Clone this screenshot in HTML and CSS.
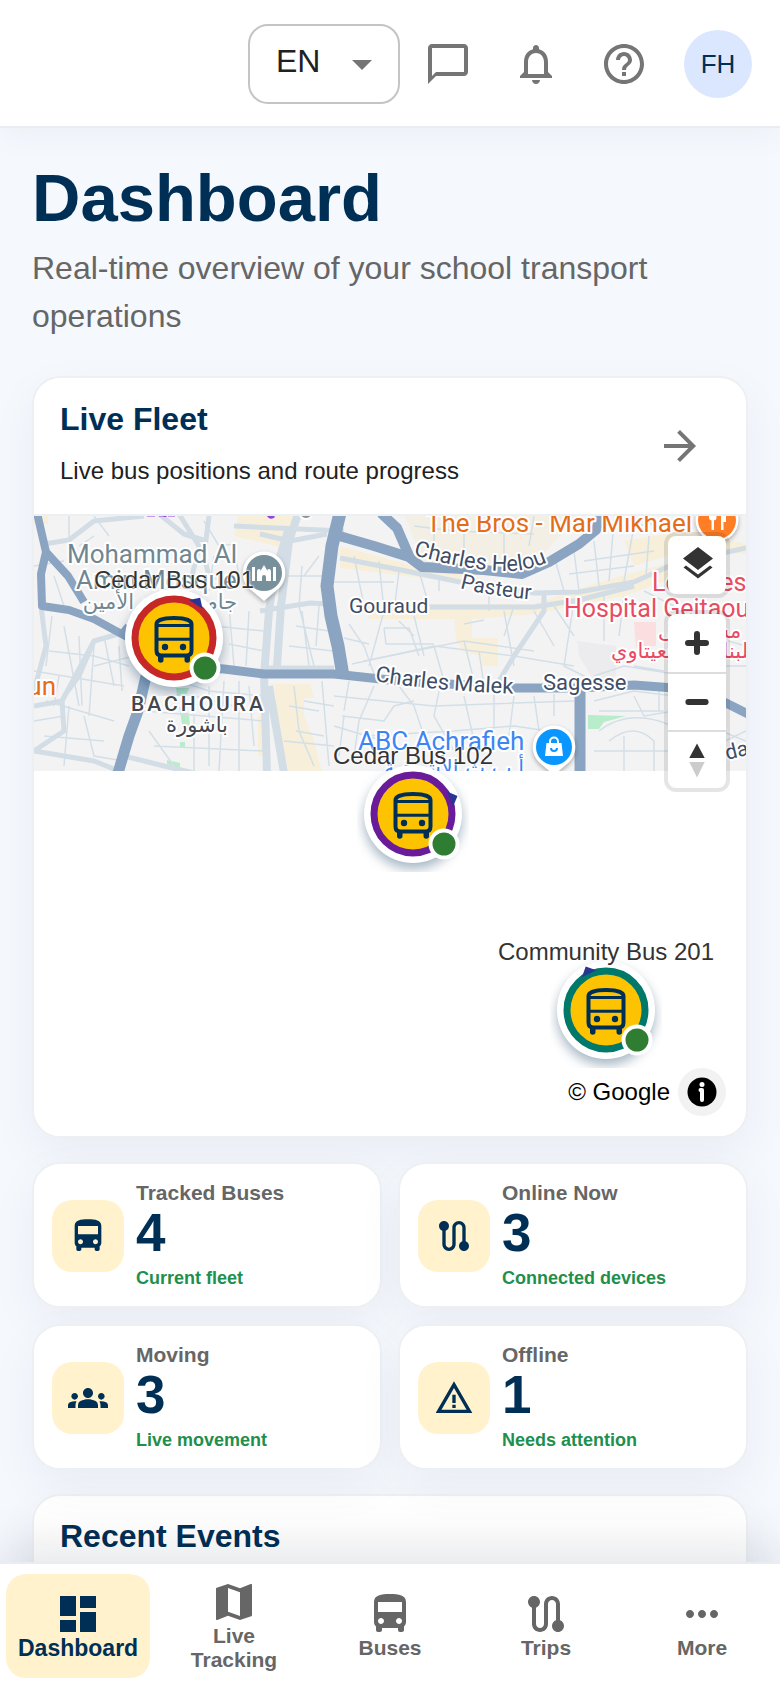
FILE: index.html
```html
<!DOCTYPE html>
<html lang="en">

<head>
  <meta charset="UTF-8" />
  <meta name="viewport" content="width=device-width, initial-scale=1.0" />
  <title>Dashboard</title>
  <link rel="stylesheet" href="styles.css">
</head>

<body>
  <!-- shared icons -->
  <svg class="sprite" aria-hidden="true">
    <symbol id="i-bus" viewBox="0 0 24 24">
      <path d="M4 16c0 .88.39 1.67 1 2.22V20c0 .55.45 1 1 1h1c.55 0 1-.45 1-1v-1h8v1c0 .55.45 1 1 1h1c.55 0 1-.45 1-1v-1.780c.61-.55 1-1.340 1-2.220V6c0-3.500-3.580-4-8-4s-8 .5-8 4v10zm3.500 1c-.83 0-1.500-.67-1.500-1.500S6.670 14 7.500 14s1.500.67 1.500 1.500S8.330 17 7.500 17zm9 0c-.83 0-1.500-.67-1.500-1.500s.67-1.500 1.500-1.500 1.500.67 1.500 1.500-.67 1.500-1.500 1.500zm1.500-6H6V6h12v5z" />
    </symbol>
    <symbol id="i-route" viewBox="0 0 24 24">
      <path d="M19 15.180V7c0-2.210-1.790-4-4-4s-4 1.790-4 4v10c0 1.100-.9 2-2 2s-2-.9-2-2V8.820C8.160 8.400 9 7.300 9 6c0-1.660-1.340-3-3-3S3 4.340 3 6c0 1.300.84 2.400 2 2.820V17c0 2.210 1.790 4 4 4s4-1.790 4-4V7c0-1.100.9-2 2-2s2 .9 2 2v8.180c-1.160.41-2 1.510-2 2.820 0 1.660 1.340 3 3 3s3-1.340 3-3c0-1.300-.84-2.400-2-2.820z" />
    </symbol>
    <symbol id="i-marker-bus" viewBox="-24 -24 48 50">
      <g fill="none" stroke="#002f56" stroke-width="4">
        <path d="M-17.500-14C-17.500-18-10-20 0-20S17.500-18 17.500-14V12.500Q17.500 17.500 12.500 17.500H-12.500Q-17.500 17.500-17.500 12.500Z" />
        <path d="M-17-12.500H17M-17 1.300H17" stroke-width="3" />
      </g>
      <path fill="#002f56" d="M-16 17h5.500v5a2.700 2.700 0 0 1-5.500 0zM10.500 17H16v5a2.700 2.700 0 0 1-5.500 0z" />
      <circle cx="-9" cy="9" r="3.200" fill="#002f56" />
      <circle cx="9" cy="9" r="3.200" fill="#002f56" />
    </symbol>
  </svg>

  <div class="app">
    <header class="topbar">
      <div class="lang">
        <select class="lang-select" aria-label="Language">
          <option>EN</option>
        </select>
        <svg class="lang-arrow" viewBox="0 0 24 24"><path d="M7 10l5 5 5-5z" /></svg>
      </div>
      <button class="icon-btn" aria-label="Messages">
        <svg viewBox="0 0 24 24"><path d="M20 2H4c-1.100 0-2 .9-2 2v18l4-4h14c1.100 0 2-.9 2-2V4c0-1.100-.9-2-2-2zm0 14H6l-2 2V4h16v12z" /></svg>
      </button>
      <button class="icon-btn" aria-label="Notifications">
        <svg viewBox="0 0 24 24"><path d="M12 22c1.100 0 2-.9 2-2h-4c0 1.100.9 2 2 2zm6-6v-5c0-3.070-1.630-5.640-4.500-6.320V4c0-.83-.67-1.500-1.500-1.500s-1.500.67-1.500 1.500v.68C7.640 5.360 6 7.920 6 11v5l-2 2v1h16v-1l-2-2zm-2 1H8v-6c0-2.480 1.510-4.500 4-4.500s4 2.020 4 4.500v6z" /></svg>
      </button>
      <button class="icon-btn" aria-label="Help">
        <svg viewBox="0 0 24 24"><path d="M11 18h2v-2h-2v2zm1-16C6.480 2 2 6.480 2 12s4.480 10 10 10 10-4.480 10-10S17.520 2 12 2zm0 18c-4.410 0-8-3.590-8-8s3.590-8 8-8 8 3.590 8 8-3.590 8-8 8zm0-14c-2.210 0-4 1.790-4 4h2c0-1.100.9-2 2-2s2 .9 2 2c0 2-3 1.750-3 5h2c0-2.250 3-2.500 3-5 0-2.210-1.790-4-4-4z" /></svg>
      </button>
      <button class="avatar">FH</button>
    </header>

    <main class="content">
      <h1 class="title">Dashboard</h1>
      <p class="subtitle">Real-time overview of your school transport operations</p>

      <section class="card fleet">
        <div class="card-head">
          <div class="card-text">
            <h2 class="card-title">Live Fleet</h2>
            <p class="card-sub">Live bus positions and route progress</p>
          </div>
          <button class="icon-btn" aria-label="Open live tracking">
            <svg viewBox="0 0 24 24"><path d="M12 4l-1.410 1.410L16.170 11H4v2h12.170l-5.580 5.590L12 20l8-8z" /></svg>
          </button>
        </div>

        <div class="map">
          <svg class="tile" width="712" height="255" viewBox="0 0 712 255">
            <rect width="712" height="255" fill="#f4f3f4" />
            <!-- blocks -->
            <g fill="#f7efd9">
              <path d="M205-2H262L250 32 200 20Z" />
              <path d="M370-2H545L510 38 460 52 390 48Z" fill="#f3efe4" />
              <path d="M306 30L380 50 450 62 440 68 306 52Z" />
              <path d="M330 88H500L560 68 640 45V62L590 80 500 98 440 103H335Z" />
              <path d="M420 98H438V122H464V150H448V140L430 136 422 125Z" />
              <path d="M240 168H276L280 182H270V200L280 225 288 257H255L244 210Z" />
              <path d="M224 200H232V240H224ZM590 25L650 15 712 28V38L650 35 600 50ZM0 -2H14V8H0Z" />
            </g>
            <path d="M543 125L582 130V160L560 165 545 140Z" fill="#ececee" />
            <path d="M600 106H622V130L602 132Z" fill="#fbdfe0" />
            <g fill="#b8ecca">
              <path d="M142 172H155L152 180H143ZM145 190L155 198 156 212 148 208ZM146 226H151V231H146ZM133 244L146 247V252L133 248Z" />
              <path d="M554 199L592 200 570 206 565 213H554Z" />
            </g>
            <!-- side streets -->
            <g fill="none" stroke="#d3dfe7" stroke-width="1.500">
              <path d="M35 0V30M60 0L75 20M0 50L30 45M20 60L30 90M45 30L60 20M170 5L185 30 200 28M180 40L175 75M200 30L205 60M160 60L200 65M195 90L200 150M215 95L212 150M180 110L230 115M195 128L230 135M130 110L160 95" />
              <path d="M18 100L12 150M30 110L45 190M15 135L60 140 95 150M45 120L48 190M60 130L55 200M0 155L90 170M25 160L20 190M60 150L100 140M70 120L80 170M85 130L88 175M12 185L80 205M35 190L30 250M50 200L60 240 90 245M10 220L70 225M0 205L30 200" />
              <path d="M110 195L230 205M115 215L140 250M120 230L230 235M160 200V255M175 170V250M190 165L185 255M205 165V255M215 170L220 230M130 160L175 175 230 180M160 180L200 190" />
              <path d="M268 50L265 90 280 150M285 40L270 60M250 60H290M262 110L295 115M255 130L300 135M268 95L275 150M285 90L282 130M320 40L330 90M345 45L350 95 335 150M365 55L360 95M300 66H360M385 55L395 90M405 60V75M315 108L330 130 340 158M350 112H375L385 140M350 112L352 128H400M365 105L380 120M380 100L390 140M310 122L335 128M318 148L400 130 480 140 540 150" />
              <path d="M330 145L430 125 500 135M400 130L410 165M430 125L440 165M445 135L450 170M480 90L470 120M455 78V95M430 108L450 104M315 165L310 195M340 170L325 205 320 240M300 180L400 190 540 185M308 200L350 205 360 190 380 185M365 170L380 190 390 220M405 175L400 200 420 235M430 180L440 225M460 178V225M480 180L475 220M500 180L505 215M520 178V200M330 220L420 215 480 210 535 218M300 210L350 225" />
              <path d="M260 170L265 215 280 250M270 185L300 190M255 190L285 195M262 215L290 220M250 225L300 230M288 165L295 250M310 200L305 240M500 0L495 30M520 40L530 75M540 35L545 75M560 25L565 70M580 5L575 65M600 10L590 65M615 20L612 60M550 45L620 35M535 58L600 50M560 15L640 5M470 95L480 150M500 95L520 130M520 90L540 120M540 85L530 150 560 165M570 80V125M590 80L585 120M610 75L640 90M575 100H610M600 150L630 155M560 160L590 150 640 158" />
              <path d="M560 185L600 175 640 180M565 195H630M565 215Q590 195 625 205T640 255M575 225Q600 205 620 225V255M590 220V255M560 235H640M600 180L610 200 640 195M625 170V195M650 200L712 225M660 240L712 215M640 110L712 130M650 150H712M380 10L420 15 500 18M400 0V40M430 15V50M470 5V50" />
            </g>
            <g fill="none" stroke="#d3dde5" stroke-linejoin="round">
              <path stroke-width="5" d="M10 28L35 24 60 5 110 0M125-2L150 18 172 25M145-2L165 30 158 60M175 0L170 40 175 60M0 190L28 185 60 125 95 115M28 185L30 215 0 235M60 125L45 160 30 180M0 235L60 245 90 257M90 240L130 250 160 257M7 90L12 130 0 175M226 18L256 25 293 18M226 95L276 87 293 88" />
              <path stroke-width="8" d="M264-2L255 25 247 90 243 150 240 160M254 15L240 60 235 95 230 160 233 257M235 170L250 257" />
              <path stroke-width="5" d="M306 42L372 55 426 66 500 77 545 76 600 66 640 48 712 32M396 91H500L545 84 600 70M510 77L510 95 480 140 462 170M310 15L200 10M290 153H240" />
              <path stroke-width="7" d="M228 153H300" />
            </g>
            <!-- main roads -->
            <g fill="none" stroke="#8aa4c1" stroke-width="10" stroke-linejoin="round">
              <path stroke-width="8" d="M3-3L12 36 7 58 8 90 35 94 60 103 95 122M12 36L34 60 50 86" />
              <path d="M88 112L110 130M112 160L104 195 95 220 84 257" stroke-width="11" />
              <path d="M140 150L190 153 230 158 300 158 365 165 480 172 545 172 600 169 640 172 690 186 714 198" stroke-width="9" />
              <path d="M306-3L298 30 293 70 297 100 304 130 309 160" stroke-width="13" />
              <path d="M302 19L340 30 378 42M347-3L363 12 376 42 388 51 450 54 488 58 515 46 545 28 562 14 567-3" />
              <path d="M546 176V257" stroke-width="11" />
            </g>
            <path d="M113-1h8M125-1h6v2M134-1h7M234-1q3 4 6 1" stroke="#9344e0" stroke-width="3" fill="none" />
            <circle cx="272" cy="-4" r="7" fill="#8b9296" stroke="#fff" stroke-width="2" />

            <!-- places -->
            <g class="place">
              <g fill="#6f8792">
                <text x="33" y="47">Mohammad Al</text>
                <text x="42" y="73">Amin Mosque</text>
                <text class="ar" x="126" y="93" text-anchor="middle">جامع محمد الأمين</text>
              </g>
              <g fill="#e36d1a">
                <text x="392" y="16">The Bros - Mar Mikhael</text>
                <text x="22" y="179" text-anchor="end">un</text>
              </g>
              <g fill="#e94c62">
                <text class="sm" x="618" y="75">Lebanese</text>
                <text class="sm" x="530" y="101">Hospital Geitaoui</text>
                <text class="ar" x="624" y="122" text-anchor="end">مستشفى</text>
                <text class="ar" x="577" y="142" text-anchor="end">اللبناني الجعيتاوي</text>
              </g>
              <g fill="#3c85f2">
                <text x="324" y="234">ABC Achrafieh</text>
                <text class="ar" x="490" y="259" text-anchor="start">أ ب ث الأشرفية</text>
              </g>
              <g fill="#44474d">
                <text class="district" x="97" y="195">BACHOURA</text>
                <text class="ar" x="163" y="216" text-anchor="middle">باشورة</text>
              </g>
            </g>
            <g class="street">
              <path id="helou" d="M379 39Q440 56 478 55 500 54 524 41" fill="none" />
              <path id="pasteur" d="M426 72Q455 80 504 84" fill="none" />
              <path id="malek" d="M341 165Q400 175 488 178" fill="none" />
              <text class="lg"><textPath href="#helou">Charles Helou</textPath></text>
              <text><textPath href="#pasteur">Pasteur</textPath></text>
              <text class="lg"><textPath href="#malek">Charles Malek</textPath></text>
              <text class="lg" x="509" y="174">Sagesse</text>
              <text x="315" y="97">Gouraud</text>
              <text transform="translate(693 244) rotate(-14)">dar</text>
            </g>

            <!-- place pins -->
            <g class="pin">
              <path d="M230 35.500a21.500 21.500 0 0 1 13 38.500L230 85l-13-11a21.500 21.500 0 0 1 13-38.500z" fill="#fff" />
              <circle cx="230" cy="57" r="18" fill="#78909c" />
              <path d="M218 51h3v14h-3zM239 51h3v14h-3zM223 65V56q0-3 2-3t2 3v-2l3-5 3 5v2q0-3 2-3t2 3v9h-5v-4a2 2 0 0 0-4 0v4z" fill="#fff" />
            </g>
            <g class="pin">
              <path d="M520 209.500a21.500 21.500 0 0 1 13 38.500L520 259l-13-11a21.500 21.500 0 0 1 13-38.500z" fill="#fff" />
              <circle cx="520" cy="231" r="18" fill="#0a96ff" />
              <path d="M512.500 227h15l1.500 13h-18z" fill="#fff" />
              <path d="M516 228v-2.500a4 4 0 0 1 8 0V228" fill="none" stroke="#fff" stroke-width="2" />
              <path d="M517 232a3 3 0 0 0 6 0" fill="none" stroke="#0a96ff" stroke-width="2" />
            </g>
            <g class="pin">
              <circle cx="683" cy="4" r="21.500" fill="#fff" />
              <circle cx="683" cy="4" r="19" fill="#ff7d24" />
              <path d="M675-5v7q0 2 2.500 2.500V14h2.500V4.500q2.500-.5 2.500-2.500V-5zM687-5v19h2.500V6h2.500V0q0-5-5-5z" fill="#fff" />
            </g>
          </svg>

          <div class="marker marker-101">
            <svg viewBox="-56 -58 112 116">
              <circle class="m-disk" r="49" />
              <circle r="39" fill="#fdc300" stroke="#c62828" stroke-width="7" />
              <path d="M0-48L8-40H-8z" fill="#283593" transform="rotate(33)" />
              <use href="#i-marker-bus" x="-24" y="-24" width="48" height="50" />
              <circle cx="31" cy="30" r="13.500" fill="#2e7d32" stroke="#fff" stroke-width="4" />
            </svg>
            <span class="marker-label">Cedar Bus 101</span>
          </div>
          <div class="marker marker-102">
            <svg viewBox="-56 -58 112 116">
              <circle class="m-disk" r="49" />
              <circle r="39" fill="#fdc300" stroke="#6a1b9a" stroke-width="7" />
              <path d="M0-48L8-40H-8z" fill="#283593" transform="rotate(68)" />
              <use href="#i-marker-bus" x="-24" y="-24" width="48" height="50" />
              <circle cx="31" cy="30" r="13.500" fill="#2e7d32" stroke="#fff" stroke-width="4" />
            </svg>
            <span class="marker-label">Cedar Bus 102</span>
          </div>
          <div class="marker marker-201">
            <svg viewBox="-56 -58 112 116">
              <circle class="m-disk" r="49" />
              <circle r="39" fill="#fdc300" stroke="#00796b" stroke-width="7" />
              <path d="M0-48L8-40H-8z" fill="#283593" transform="rotate(-25)" />
              <use href="#i-marker-bus" x="-24" y="-24" width="48" height="50" />
              <circle cx="31" cy="30" r="13.500" fill="#2e7d32" stroke="#fff" stroke-width="4" />
            </svg>
            <span class="marker-label">Community Bus 201</span>
          </div>

          <div class="controls">
            <div class="control-group">
              <button aria-label="Map layers">
                <svg viewBox="0 0 58 58"><path d="M30 11l15 11.500L30 34 15 22.500zM15.500 31.500l2.500-2L30 38.500l12-9 2.500 2L30 42.500z" /></svg>
              </button>
            </div>
            <div class="control-group">
              <button aria-label="Zoom in">
                <svg viewBox="0 0 58 58"><path d="M29 20v18M20 29h18" stroke="#333" stroke-width="6" stroke-linecap="round" /></svg>
              </button>
              <button aria-label="Zoom out">
                <svg viewBox="0 0 58 58"><path d="M20 29h18" stroke="#333" stroke-width="6" stroke-linecap="round" /></svg>
              </button>
              <button aria-label="Reset north">
                <svg viewBox="0 0 58 58"><path d="M21 27l8-15 8 15z" /><path d="M21 31l8 16 8-16z" fill="#ccc" /></svg>
              </button>
            </div>
          </div>

          <div class="attrib">
            <span>© Google</span>
            <button class="attrib-btn" aria-label="Toggle attribution">
              <svg viewBox="0 0 48 48"><circle cx="24" cy="24" r="14.500" /><circle cx="24" cy="16.500" r="2.500" fill="#fff" /><path d="M22.500 22H24v10" fill="none" stroke="#fff" stroke-width="4" stroke-linecap="round" stroke-linejoin="round" /></svg>
            </button>
          </div>
        </div>
      </section>

      <section class="stats">
        <div class="card stat">
          <span class="stat-icon"><svg><use href="#i-bus" /></svg></span>
          <div>
            <p class="stat-label">Tracked Buses</p>
            <p class="stat-value">4</p>
            <p class="stat-note">Current fleet</p>
          </div>
        </div>
        <div class="card stat">
          <span class="stat-icon"><svg><use href="#i-route" /></svg></span>
          <div>
            <p class="stat-label">Online Now</p>
            <p class="stat-value">3</p>
            <p class="stat-note">Connected devices</p>
          </div>
        </div>
        <div class="card stat">
          <span class="stat-icon">
            <svg viewBox="0 0 24 24"><path d="M12 12.750c1.630 0 3.070.39 4.240.9 1.080.48 1.760 1.560 1.760 2.730V18H6v-1.610c0-1.180.68-2.260 1.760-2.730 1.170-.52 2.610-.91 4.240-.91zM4 13c1.100 0 2-.9 2-2s-.9-2-2-2-2 .9-2 2 .9 2 2 2zm1.130 1.100C4.760 14.040 4.390 14 4 14c-.99 0-1.930.21-2.780.58C.48 14.900 0 15.620 0 16.430V18h4.500v-1.610c0-.83.23-1.610.63-2.290zM20 13c1.100 0 2-.9 2-2s-.9-2-2-2-2 .9-2 2 .9 2 2 2zm4 3.430c0-.81-.48-1.530-1.220-1.850-.85-.37-1.790-.58-2.780-.58-.39 0-.76.04-1.130.1.400.68.63 1.460.63 2.290V18H24v-1.570zM12 6c1.660 0 3 1.340 3 3s-1.340 3-3 3-3-1.340-3-3 1.340-3 3-3z" /></svg>
          </span>
          <div>
            <p class="stat-label">Moving</p>
            <p class="stat-value">3</p>
            <p class="stat-note">Live movement</p>
          </div>
        </div>
        <div class="card stat">
          <span class="stat-icon">
            <svg viewBox="0 0 24 24"><path d="M12 5.990L19.530 19H4.470L12 5.990M12 2L1 21h22L12 2zm1 14h-2v2h2v-2zm0-6h-2v5h2v-5z" /></svg>
          </span>
          <div>
            <p class="stat-label">Offline</p>
            <p class="stat-value">1</p>
            <p class="stat-note">Needs attention</p>
          </div>
        </div>
      </section>

      <section class="card events">
        <h2 class="card-title">Recent Events</h2>
      </section>
    </main>

    <nav class="tabbar">
      <a class="tab active" href="#dashboard">
        <svg viewBox="0 0 24 24"><path d="M3 13h8V3H3v10zm0 8h8v-6H3v6zm10 0h8V11h-8v10zm0-18v6h8V3h-8z" /></svg>
        <span>Dashboard</span>
      </a>
      <a class="tab" href="#tracking">
        <svg viewBox="0 0 24 24"><path d="M20.500 3l-.16.030L15 5.100 9 3 3.360 4.900c-.21.070-.36.250-.36.480V20.500c0 .28.220.5.500.5l.16-.030L9 18.900l6 2.100 5.640-1.900c.21-.070.360-.250.360-.480V3.500c0-.28-.220-.5-.5-.5zM15 19l-6-2.110V5l6 2.110V19z" /></svg>
        <span>Live Tracking</span>
      </a>
      <a class="tab" href="#buses">
        <svg><use href="#i-bus" /></svg>
        <span>Buses</span>
      </a>
      <a class="tab" href="#trips">
        <svg><use href="#i-route" /></svg>
        <span>Trips</span>
      </a>
      <a class="tab" href="#more">
        <svg viewBox="0 0 24 24"><path d="M6 10c-1.100 0-2 .9-2 2s.9 2 2 2 2-.9 2-2-.9-2-2-2zm12 0c-1.100 0-2 .9-2 2s.9 2 2 2 2-.9 2-2-.9-2-2-2zm-6 0c-1.100 0-2 .9-2 2s.9 2 2 2 2-.9 2-2-.9-2-2-2z" /></svg>
        <span>More</span>
      </a>
    </nav>
  </div>
</body>

</html>
```
FILE: styles.css
```css
* {
  box-sizing: border-box;
}

body,
h1,
h2,
p {
  margin: 0;
}

body {
  font-family: "Liberation Sans", Arial, sans-serif;
  background: #f5f8fd;
  color: #212121;
}

button,
select {
  font-family: inherit;
  padding: 0;
  border: 0;
  background: none;
  cursor: pointer;
}

svg {
  display: block;
}

.sprite {
  position: absolute;
  width: 0;
  height: 0;
}

.app {
  display: flex;
  flex-direction: column;
  height: 100vh;
}

/* top bar */
.topbar {
  position: relative;
  z-index: 2;
  display: flex;
  flex: none;
  align-items: center;
  justify-content: flex-end;
  gap: 8px;
  height: 128px;
  padding: 2px 28px 0;
  background: #fff;
  border-bottom: 2px solid #e9edf1;
  box-shadow: 0 8px 32px rgba(0, 47, 86, 0.04);
}

.lang {
  position: relative;
}

.lang-select {
  appearance: none;
  display: block;
  width: 152px;
  height: 80px;
  padding: 0 64px 6px 26px;
  font-size: 32px;
  color: #212121;
  border: 2px solid #c4c4c4;
  border-radius: 20px;
}

.lang-arrow {
  position: absolute;
  right: 14px;
  top: 16px;
  width: 48px;
  height: 48px;
  fill: #757575;
  pointer-events: none;
}

.icon-btn {
  flex: none;
  width: 80px;
  height: 80px;
  padding: 16px;
}

.icon-btn svg {
  width: 48px;
  height: 48px;
  fill: #757575;
}

.avatar {
  width: 68px;
  height: 68px;
  margin-left: 12px;
  font-size: 26px;
  color: #002f56;
  background: #dbe7ff;
  border-radius: 50%;
}

/* page */
.content {
  flex: 1;
  min-height: 0;
  padding: 32px 32px 48px;
  overflow-y: auto;
  scrollbar-width: none;
}

.title {
  font-size: 67px;
  line-height: 76px;
  color: #002f56;
}

.subtitle {
  margin: 8px 0 36px;
  font-size: 32px;
  line-height: 48px;
  color: #666;
}

.card {
  background: #fff;
  border: 2px solid #edf0f3;
  border-radius: 28px;
  box-shadow: 0 16px 48px rgba(0, 47, 86, 0.05);
}

.card-head {
  display: flex;
  align-items: center;
  justify-content: space-between;
  height: 138px;
  padding: 0 26px;
  border-bottom: 2px solid #edf0f3;
}

.card-text {
  padding-bottom: 6px;
}

.card-title {
  font-size: 32px;
  line-height: 40px;
  color: #002f56;
}

.card-sub {
  margin-top: 16px;
  font-size: 24px;
  line-height: 32px;
}

/* map */
.map {
  position: relative;
  height: 620px;
  overflow: hidden;
  border-radius: 0 0 26px 26px;
}

.tile {
  font-family: Roboto, "Noto Sans", sans-serif;
}

.place text,
.street text {
  stroke: #fff;
  stroke-width: 4px;
  stroke-linejoin: round;
  paint-order: stroke;
}

.place text {
  font-size: 26px;
}

.place .sm {
  font-size: 25px;
}

.place .ar {
  font-family: "DejaVu Sans", sans-serif;
  font-size: 21px;
  direction: rtl;
}

.place .district {
  font-size: 21px;
  font-weight: 500;
  letter-spacing: 3px;
}

.street text {
  font-size: 21px;
  fill: #3f4d66;
}

.street .lg {
  font-size: 22px;
}

.pin {
  filter: drop-shadow(0 2px 2px rgba(0, 0, 0, 0.3));
}

.marker {
  position: absolute;
  width: 112px;
  height: 116px;
}

.marker svg {
  width: 112px;
  height: 116px;
}

.m-disk {
  fill: #fff;
  filter: drop-shadow(0 6px 6px rgba(0, 47, 86, 0.35));
}

.marker-label {
  position: absolute;
  left: 50%;
  top: -14px;
  transform: translateX(-50%);
  white-space: nowrap;
  font-size: 24px;
  line-height: 28px;
  color: #333;
  text-shadow: 0 0 2px #fff, 0 0 2px #fff, 0 0 3px #fff;
}

.marker-101 {
  left: 84px;
  top: 64px;
}

.marker-102 {
  left: 323px;
  top: 240px;
}

.marker-201 {
  left: 516px;
  top: 436px;
}

.controls {
  position: absolute;
  top: 20px;
  right: 20px;
  display: grid;
  gap: 20px;
}

.control-group {
  width: 58px;
  background: #fff;
  border-radius: 8px;
  box-shadow: 0 0 0 4px rgba(0, 0, 0, 0.1);
}

.control-group button {
  display: block;
  width: 58px;
  height: 58px;
}

.control-group button + button {
  border-top: 2px solid #ddd;
}

.control-group svg {
  width: 100%;
  height: 100%;
  fill: #333;
}

.attrib {
  position: absolute;
  right: 20px;
  bottom: 20px;
  display: flex;
  align-items: center;
  gap: 8px;
  font-size: 24px;
  color: #000;
}

.attrib-btn {
  width: 48px;
  height: 48px;
  background: #f2f2f2;
  border-radius: 50%;
}

/* stats */
.stats {
  display: grid;
  grid-template-columns: 1fr 1fr;
  gap: 16px;
  margin: 24px 0;
}

.stat {
  display: flex;
  align-items: center;
  gap: 12px;
  padding: 16px 18px 14px;
}

.stat-icon {
  flex: none;
  padding: 16px;
  background: #fff2cc;
  border-radius: 20px;
}

.stat-icon svg {
  width: 40px;
  height: 40px;
  fill: #002f56;
}

.stat-label {
  font-size: 21px;
  line-height: 26px;
  font-weight: bold;
  color: #666;
}

.stat-value {
  font-size: 53px;
  line-height: 54px;
  font-weight: bold;
  color: #002f56;
}

.stat-note {
  margin-top: 4px;
  font-size: 18px;
  line-height: 28px;
  font-weight: bold;
  color: #1f8f4d;
}

.events {
  min-height: 240px;
  padding: 20px 26px;
}

/* bottom tabs */
.tabbar {
  position: relative;
  z-index: 2;
  display: grid;
  flex: none;
  grid-template-columns: repeat(5, 1fr);
  padding: 10px 0;
  background: #fff;
  border-top: 2px solid #e9edf1;
  box-shadow: 0 -16px 48px rgba(0, 20, 40, 0.1);
}

.tab {
  display: flex;
  flex-direction: column;
  align-items: center;
  justify-content: center;
  height: 104px;
  margin: 0 6px;
  padding-bottom: 2px;
  font-size: 21px;
  line-height: 24px;
  font-weight: bold;
  text-align: center;
  text-decoration: none;
  color: #666;
  border-radius: 20px;
}

.tab svg {
  width: 48px;
  height: 48px;
  margin-bottom: -2px;
  fill: currentColor;
}

.tab span {
  max-width: 120px;
}

.tab.active {
  font-size: 23px;
  color: #002f56;
  background: #fff2cc;
}
```
